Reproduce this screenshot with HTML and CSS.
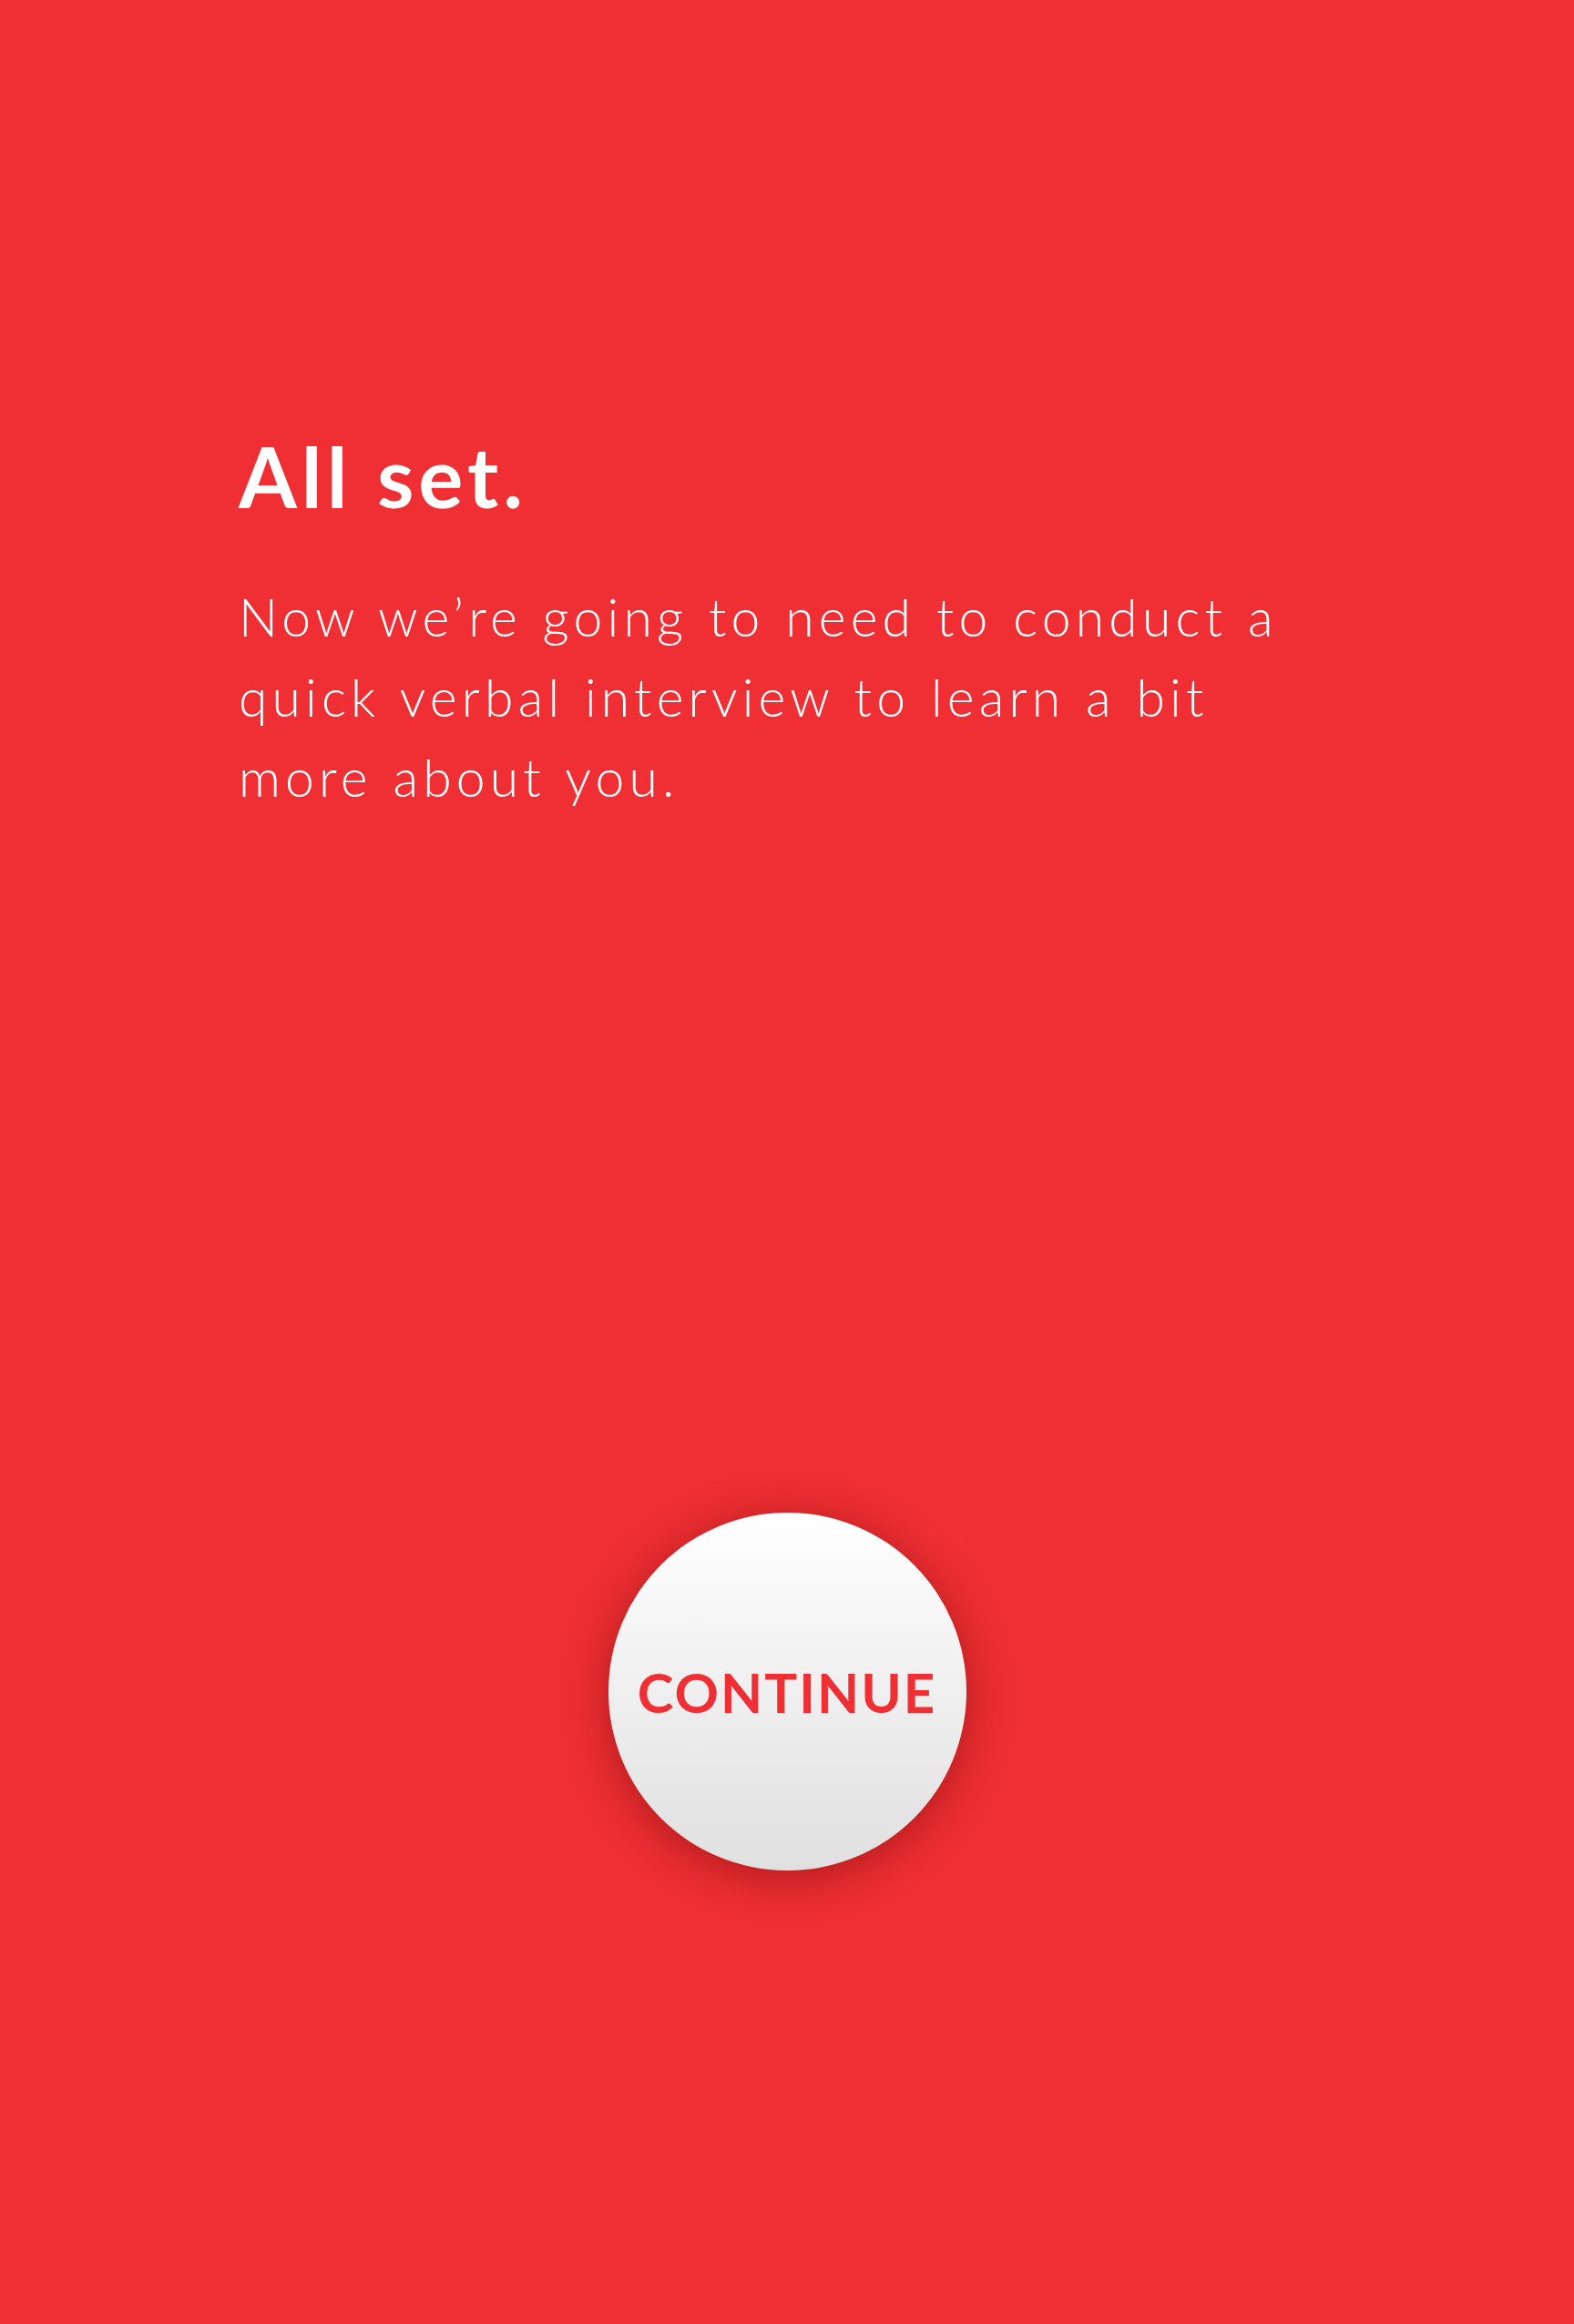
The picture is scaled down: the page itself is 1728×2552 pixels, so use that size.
FILE: index.html
```html
<!DOCTYPE html>
<html lang="en">
<head>
<meta charset="utf-8">
<title>All set</title>
<link rel="stylesheet" href="styles.css">
</head>
<body>
<main class="screen">
  <section class="intro">
    <h1 class="title">All set.</h1>
    <p class="lead">Now we’re going to need to conduct a<br>quick verbal interview to learn a bit<br>more about you.</p>
  </section>
  <div class="action">
    <button class="continue" type="button">CONTINUE</button>
  </div>
</main>
</body>
</html>
```

FILE: styles.css
```css
html, body {
  margin: 0;
  padding: 0;
}
body {
  background: #ef2f33;
  font-family: Lato, "Liberation Sans", sans-serif;
  color: #ffffff;
}
.screen {
  min-height: 2552px;
  display: flex;
  flex-direction: column;
}
.intro {
  padding: 477px 0 0 262px;
}
.title {
  margin: 0;
  font-size: 92px;
  line-height: 92px;
  font-weight: 700;
  letter-spacing: 5px;
}
.lead {
  margin: 64px 0 0 0;
  font-size: 57px;
  line-height: 88px;
  font-weight: 300;
  letter-spacing: 5.2px;
  word-spacing: 2px;
}
.action {
  display: flex;
  justify-content: center;
  padding-top: 764px;
}
.continue {
  width: 393px;
  height: 393px;
  border-radius: 50%;
  border: none;
  padding: 0;
  background: linear-gradient(180deg, #ffffff 0%, #efefef 50%, #e0e0e0 100%);
  box-shadow: 0 8px 50px rgba(90, 0, 0, 0.45);
  color: #ef2f33;
  font-family: Lato, "Liberation Sans", sans-serif;
  font-size: 60px;
  font-weight: 700;
  letter-spacing: 2px;
  display: flex;
  align-items: center;
  justify-content: center;
}
```
